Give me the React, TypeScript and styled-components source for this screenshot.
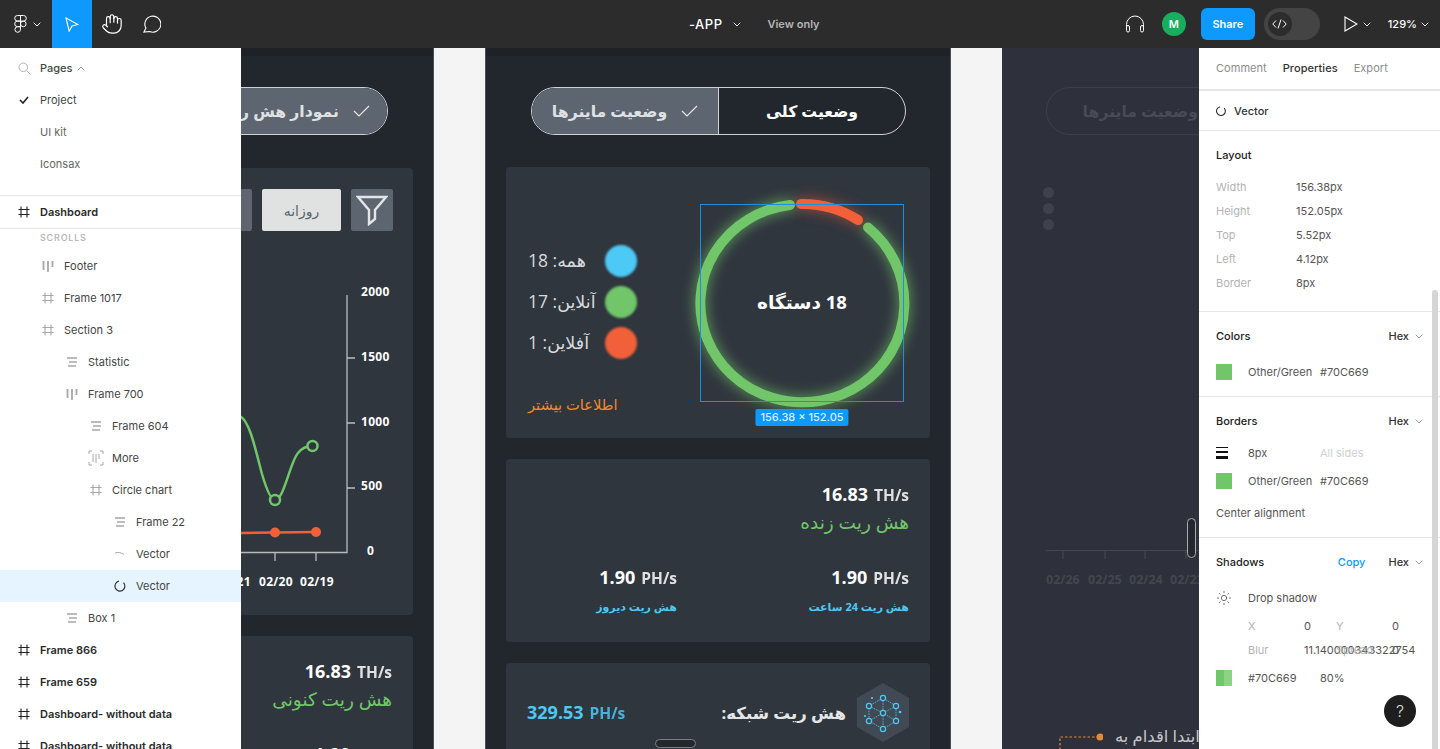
import React from 'react';
import styled, { createGlobalStyle } from 'styled-components';
import { Hand, Sun } from 'lucide-react';

const UI_FONT = `Inter, "Liberation Sans", sans-serif`;
const APP_FONT = `"Open Sans", "DejaVu Sans", sans-serif`;
const GREEN = '#70c669';
const BLUE = '#4cc9f5';
const ORANGE = '#f2603a';
const FIGMA_BLUE = '#0d99ff';

const GlobalStyle = createGlobalStyle`
  html, body { margin: 0; padding: 0; height: 100%; overflow: hidden; }
  * { box-sizing: border-box; }
  body { font-family: ${UI_FONT}; font-size: 11px; }
`;

const Shell = styled.div`
  width: 1440px;
  height: 749px;
  display: flex;
  flex-direction: column;
  overflow: hidden;
`;

/* top bar */
const TopBar = styled.header`
  height: 48px;
  flex: none;
  display: flex;
  align-items: center;
  background: #2c2c2c;
  color: #fff;
  padding-right: 11px;
`;
const ToolGroup = styled.div`
  width: 689px;
  height: 100%;
  display: flex;
  align-items: center;
`;
const LogoButton = styled.div`
  width: 52px;
  height: 100%;
  display: flex;
  align-items: center;
  gap: 6px;
  padding-left: 14px;
`;
const ToolButton = styled.div<{ $active?: boolean }>`
  width: 40px;
  height: 100%;
  display: flex;
  align-items: center;
  justify-content: center;
  background: ${(p) => (p.$active ? FIGMA_BLUE : 'transparent')};
`;
const FileTitle = styled.div`
  display: flex;
  align-items: center;
  gap: 11px;
  font-size: 13px;
  font-weight: 500;
  letter-spacing: 0.5px;
`;
const ViewOnly = styled.span`
  margin-left: 26px;
  font-size: 11px;
  font-weight: 600;
  color: #b5b5b5;
`;
const RightTools = styled.div`
  margin-left: auto;
  display: flex;
  align-items: center;
`;
const Avatar = styled.div`
  width: 24px;
  height: 24px;
  border-radius: 50%;
  margin: 0 15px 0 17px;
  background: #18ae5e;
  display: flex;
  align-items: center;
  justify-content: center;
  font-size: 11px;
  font-weight: 600;
`;
const ShareButton = styled.div`
  width: 54px;
  height: 32px;
  border-radius: 6px;
  background: ${FIGMA_BLUE};
  display: flex;
  align-items: center;
  justify-content: center;
  font-size: 11px;
  font-weight: 600;
`;
const CodeToggle = styled.div`
  width: 56px;
  height: 32px;
  margin: 0 24px 0 9px;
  border-radius: 16px;
  background: #444;
  padding: 4px;
`;
const CodeKnob = styled.div`
  width: 24px;
  height: 24px;
  border-radius: 50%;
  background: #2c2c2c;
  display: flex;
  align-items: center;
  justify-content: center;
`;
const ZoomLabel = styled.span`
  margin: 0 4px 0 17px;
  font-size: 11px;
  font-weight: 500;
`;
const PlayGroup = styled.div`
  display: flex;
  align-items: center;
  gap: 5px;
`;

const Main = styled.div`
  flex: 1;
  min-height: 0;
  display: flex;
`;

/* layers panel */
const LayersPanel = styled.aside`
  width: 241px;
  flex: none;
  background: #fff;
  color: #333;
  padding-top: 4px;
  overflow: hidden;
  position: relative;
  z-index: 2;
`;
const LayerRow = styled.div<{ $indent?: number; $strong?: boolean; $selected?: boolean; $muted?: boolean }>`
  height: 32px;
  display: flex;
  align-items: center;
  gap: 8px;
  padding-left: ${(p) => 16 + (p.$indent || 0) * 24}px;
  background: ${(p) => (p.$selected ? '#e5f4ff' : 'transparent')};
  font-weight: ${(p) => (p.$strong ? 600 : 400)};
  color: ${(p) => (p.$muted ? '#666' : p.$strong ? '#2a2a2a' : '#444')};
  white-space: nowrap;
`;
const LayerIconBox = styled.span`
  width: 16px;
  height: 16px;
  flex: none;
  display: flex;
  align-items: center;
  justify-content: center;
`;
const PagesGroup = styled.div`
  padding-bottom: 15px;
  border-bottom: 1px solid #e5e5e5;
`;
const CurrentPage = styled.div`
  border-bottom: 1px solid #e5e5e5;
`;
const PagesTitle = styled.span`
  display: flex;
  align-items: center;
  gap: 5px;
  font-weight: 500;
`;
const ScrollLabel = styled.div`
  height: 21px;
  padding: 0 0 4px 40px;
  display: flex;
  align-items: center;
  font-size: 9px;
  font-weight: 500;
  letter-spacing: 0.8px;
  color: #b3b3b3;
`;

/* canvas */
const Canvas = styled.main`
  flex: 1;
  min-width: 0;
  position: relative;
  overflow: hidden;
  background: #f4f4f4;
  font-family: ${APP_FONT};
`;
const Frame = styled.section<{ $left: number; $faded?: boolean }>`
  position: absolute;
  top: 0;
  left: ${(p) => p.$left}px;
  width: 466px;
  height: 100%;
  overflow: hidden;
  background: ${(p) => (p.$faded ? '#2e303b' : '#22262d')};
  border-left: 1px solid ${(p) => (p.$faded ? '#2e303b' : '#4b4f55')};
  border-right: 1px solid ${(p) => (p.$faded ? '#2e303b' : '#4b4f55')};
`;
const FrameStrip = styled.div<{ $faded?: boolean }>`
  height: 8px;
  background: ${(p) => (p.$faded ? 'transparent' : '#1e2126')};
`;
const PillBar = styled.div<{ $faded?: boolean; $inset: number }>`
  width: 375px;
  height: 48px;
  margin: 31px 0 0 ${(p) => p.$inset}px;
  display: flex;
  border: 1.5px solid ${(p) => (p.$faded ? '#3d404b' : '#cfd2d4')};
  border-radius: 24px;
  overflow: hidden;
`;
const PillSegment = styled.div<{ $active?: boolean; $faded?: boolean; $divider?: boolean }>`
  flex: 1;
  display: flex;
  flex-direction: row-reverse;
  align-items: center;
  justify-content: center;
  gap: 14px;
  font-size: 15.7px;
  font-weight: 700;
  white-space: nowrap;
  color: ${(p) => (p.$faded ? '#484b56' : p.$active ? '#dfe1e3' : '#fff')};
  background: ${(p) => (p.$active ? '#5c6570' : 'transparent')};
  border-left: ${(p) => (p.$divider ? '1.5px solid #cfd2d4' : 'none')};
`;
const Card = styled.div<{ $top: number; $height?: number }>`
  margin: ${(p) => p.$top}px 20px 0;
  ${(p) => (p.$height ? `height: ${p.$height}px;` : '')}
  background: #30363e;
  border-radius: 4px;
`;
const FilterBody = styled.div`
  display: flex;
  flex-direction: column;
  align-items: flex-end;
  padding: 21px 20px 0 0;
  height: 100%;
`;
const FilterRow = styled.div`
  display: flex;
  gap: 10px;
`;
const FilterChip = styled.div<{ $light?: boolean; $width: number }>`
  width: ${(p) => p.$width}px;
  height: 42px;
  flex: none;
  display: flex;
  align-items: center;
  justify-content: center;
  border-radius: 2px;
  font-size: 14px;
  color: #5c646e;
  background: ${(p) => (p.$light ? '#e0e2e2' : '#5c6570')};
`;
const ChartSvg = styled.svg`
  display: block;
  margin-top: 49px;
  font-family: ${APP_FONT};
  font-size: 12px;
  font-weight: 700;
  letter-spacing: 0.3px;
`;
const StatsBody = styled.div`
  padding: 23px 21px 0;
  display: flex;
  flex-direction: column;
  align-items: flex-end;
`;
const Rate = styled.div<{ $color?: string }>`
  font-size: 18px;
  line-height: 24px;
  font-weight: 700;
  color: ${(p) => p.$color || '#fff'};
  white-space: nowrap;
`;
const RateUnit = styled.span`
  font-size: 15.5px;
  font-weight: 700;
  color: inherit;
  opacity: 0.85;
  margin-left: 6px;
`;
const RateLabel = styled.div<{ $small?: boolean; $color: string }>`
  direction: rtl;
  font-size: ${(p) => (p.$small ? 11 : 18.5)}px;
  font-weight: ${(p) => (p.$small ? 700 : 400)};
  line-height: 24px;
  margin-top: ${(p) => (p.$small ? 5 : 3)}px;
  color: ${(p) => p.$color};
  white-space: nowrap;
`;
const StatsPair = styled.div`
  align-self: stretch;
  display: flex;
  justify-content: space-between;
  margin-top: 31px;
  padding-left: 34px;
`;
const StatCol = styled.div`
  width: 116px;
  display: flex;
  flex-direction: column;
  align-items: flex-end;
`;

/* device overview card */
const OverviewBody = styled.div`
  height: 100%;
  display: flex;
  justify-content: space-between;
  padding: 16px 8px 0 22px;
`;
const LegendColumn = styled.div`
  width: 109px;
  padding-top: 62px;
  display: flex;
  flex-direction: column;
`;
const LegendRow = styled.div`
  height: 32px;
  margin-bottom: 9px;
  display: flex;
  align-items: center;
  justify-content: space-between;
`;
const LegendText = styled.span`
  direction: rtl;
  color: #d8dadc;
  font-size: 17.5px;
  line-height: 28px;
  margin-top: -3px;
  white-space: nowrap;
`;
const LegendDot = styled.span<{ $color: string }>`
  width: 32px;
  height: 32px;
  flex: none;
  border-radius: 50%;
  background: ${(p) => p.$color};
  filter: blur(0.8px);
`;
const MoreLink = styled.div`
  direction: rtl;
  margin-top: 26px;
  width: 110px;
  color: #f0892c;
  font-size: 14.7px;
  white-space: nowrap;
  text-align: left;
`;
const RingBox = styled.div`
  width: 240px;
  height: 240px;
  flex: none;
  position: relative;
  display: flex;
  align-items: center;
  justify-content: center;
`;
const RingSvg = styled.svg`
  position: absolute;
  inset: 0;
  overflow: visible;
`;
const RingCaption = styled.span`
  position: relative;
  top: -2px;
  direction: rtl;
  color: #fff;
  font-size: 18.5px;
  font-weight: 700;
`;
const SelectionBox = styled.div`
  position: absolute;
  left: 18px;
  top: 21px;
  width: 204px;
  height: 198px;
  border: 1px solid #1a8fe3;
`;
const SizeBadge = styled.div`
  position: absolute;
  left: 50%;
  top: 226px;
  transform: translateX(-50%);
  height: 17px;
  padding: 0 5px;
  border-radius: 2px;
  background: ${FIGMA_BLUE};
  color: #d9f0ff;
  font-family: ${UI_FONT};
  font-size: 11px;
  font-weight: 500;
  line-height: 17px;
  white-space: nowrap;
`;
const NetworkBody = styled.div`
  height: 98px;
  display: flex;
  align-items: center;
  justify-content: space-between;
  padding: 0 21px;
`;
const NetworkTitle = styled.div`
  display: flex;
  align-items: center;
  gap: 11px;
  color: #e5e6e7;
  font-size: 16.6px;
  font-weight: 700;
`;
const NetworkText = styled.span`
  direction: rtl;
`;

/* faded neighbour frame */
const FadedDots = styled.div`
  display: flex;
  flex-direction: column;
  gap: 5px;
  margin: 52px 0 0 40px;
`;
const FadedDot = styled.span`
  width: 11px;
  height: 11px;
  border-radius: 50%;
  background: #3f424d;
`;
const FadedAxis = styled.svg`
  display: block;
  margin: 314px 0 0 43px;
  font-family: ${APP_FONT};
  font-size: 12.5px;
  font-weight: 700;
`;
const NoteRow = styled.div`
  display: flex;
  align-items: flex-start;
  gap: 12px;
  margin: 138px 0 0 56px;
`;
const NoteText = styled.span`
  direction: rtl;
  color: #c4c5c9;
  font-size: 16.4px;
  line-height: 20px;
  white-space: nowrap;
`;
const ResizeHandle = styled.div<{ $x: number; $y: number; $w: number; $h: number; $edge: string }>`
  position: absolute;
  left: ${(p) => p.$x}px;
  top: ${(p) => p.$y}px;
  width: ${(p) => p.$w}px;
  height: ${(p) => p.$h}px;
  border: 1px solid ${(p) => p.$edge};
  border-radius: 5px;
  background: #24272e;
`;

/* inspect panel */
const InspectPanel = styled.aside`
  width: 241px;
  flex: none;
  position: relative;
  z-index: 2;
  background: #fff;
  color: #333;
  overflow: hidden;
`;
const Tabs = styled.div`
  height: 43px;
  display: flex;
  align-items: center;
  gap: 16px;
  padding: 0 0 2px 17px;
  border-bottom: 2px solid #e6e6e6;
  letter-spacing: 0.05px;
`;
const Tab = styled.span<{ $active?: boolean }>`
  font-weight: ${(p) => (p.$active ? 500 : 400)};
  color: ${(p) => (p.$active ? '#333' : '#8c8c8c')};
`;
const SelectedRow = styled.div`
  height: 40px;
  display: flex;
  align-items: center;
  gap: 8px;
  padding: 0 17px;
  font-weight: 500;
  border-bottom: 1px solid #e6e6e6;
`;
const Section = styled.div<{ $bottom: number; $last?: boolean }>`
  padding: 16px 17px ${(p) => p.$bottom}px;
  border-bottom: ${(p) => (p.$last ? 'none' : '1px solid #e6e6e6')};
`;
const SectionHead = styled.div<{ $gap: number }>`
  height: 16px;
  margin-bottom: ${(p) => p.$gap}px;
  display: flex;
  align-items: center;
  font-weight: 500;
  color: #222;
`;
const HeadAction = styled.span<{ $blue?: boolean; $first?: boolean }>`
  display: flex;
  align-items: center;
  gap: 6px;
  margin-left: ${(p) => (p.$first ? 'auto' : '23px')};
  color: ${(p) => (p.$blue ? FIGMA_BLUE : '#333')};
`;
const PropRow = styled.div<{ $height?: number }>`
  height: ${(p) => p.$height || 24}px;
  display: flex;
  align-items: center;
  white-space: nowrap;
`;
const PropLabel = styled.span<{ $width?: number; $offset?: number }>`
  width: ${(p) => p.$width || 80}px;
  margin-left: ${(p) => p.$offset || 0}px;
  flex: none;
  color: #b3b3b3;
`;
const PropValue = styled.span<{ $width?: number; $muted?: boolean }>`
  ${(p) => (p.$width ? `width: ${p.$width}px; flex: none;` : '')}
  color: ${(p) => (p.$muted ? '#cfcfcf' : '#555')};
`;
const IconCell = styled.span`
  width: 32px;
  flex: none;
  display: flex;
  align-items: center;
`;
const Swatch = styled.span<{ $alpha?: boolean }>`
  width: 16px;
  height: 16px;
  display: block;
  background: ${(p) =>
    p.$alpha ? `linear-gradient(90deg, ${GREEN} 50%, rgba(112,198,105,0.8) 50%)` : GREEN};
`;
const ThicknessIcon = styled.span`
  width: 12px;
  height: 12px;
  display: flex;
  flex-direction: column;
  justify-content: space-between;
  &::before, &::after { content: ''; display: block; background: #111; }
  &::before { height: 1px; }
  &::after { height: 3px; }
`;
const ThicknessMid = styled.i`
  display: block;
  height: 2px;
  background: #111;
`;
const PanelScrollbar = styled.div`
  position: absolute;
  right: 2px;
  top: 242px;
  bottom: 0;
  width: 6px;
  border-radius: 3px 3px 0 0;
  background: #d5d5d5;
`;
const HelpButton = styled.div`
  position: absolute;
  left: 185px;
  top: 647px;
  width: 32px;
  height: 32px;
  border-radius: 50%;
  background: #1e1e1e;
  color: #ddd;
  display: flex;
  align-items: center;
  justify-content: center;
  font-size: 16px;
  font-weight: 300;
`;

const Chevron = ({ color = '#fff', up = false }: { color?: string; up?: boolean }) => (
  <svg width="8" height="5" viewBox="0 0 8 5" fill="none">
    <path d={up ? 'M.7 4.3 4 1l3.3 3.3' : 'M.7.7 4 4 7.3.7'} stroke={color} strokeWidth="1" />
  </svg>
);

const CheckMark = () => (
  <svg width="17" height="12" viewBox="0 0 17 12" fill="none">
    <path d="M1 6l5 5L16 1" stroke="#e3e5e6" strokeWidth="1.2" />
  </svg>
);

type LayerKind = 'frame' | 'columns' | 'rows' | 'more' | 'curve' | 'arc' | 'none';

const LayerIcon = ({ kind, dark }: { kind: LayerKind; dark?: boolean }) => {
  const c = dark ? '#222' : '#a8a8a8';
  if (kind === 'none') return <LayerIconBox />;
  return (
    <LayerIconBox>
      <svg width="16" height="16" viewBox="0 0 16 16" fill="none" stroke={c}>
        {kind === 'frame' && <path d="M5 2.5v11M11 2.5v11M2.5 5.5h11M2.5 10.5h11" strokeWidth="1.1" />}
        {kind === 'columns' && <path d="M3.5 3v9M8 3v11M12.5 3v6" strokeWidth="1.8" />}
        {kind === 'rows' && <path d="M3 4h10M5 8h8M4 12h8" strokeWidth="1.6" />}
        {kind === 'more' && (
          <path d="M1 4V1h3M12 1h3v3M1 12v3h3M12 15h3v-3M5 4v8M8 4v9M11 4v5" strokeWidth="1" />
        )}
        {kind === 'curve' && <path d="M3 7c3-1 6-.5 9 1.4" strokeWidth="1" />}
        {kind === 'arc' && <path d="M7 3.2a5 5 0 1 0 4.5 1.4" stroke="#333" strokeWidth="1.2" />}
      </svg>
    </LayerIconBox>
  );
};

const LAYERS: { name: string; kind: LayerKind; indent: number; strong?: boolean; selected?: boolean }[] = [
  { name: 'Footer', kind: 'columns', indent: 1 },
  { name: 'Frame 1017', kind: 'frame', indent: 1 },
  { name: 'Section 3', kind: 'frame', indent: 1 },
  { name: 'Statistic', kind: 'rows', indent: 2 },
  { name: 'Frame 700', kind: 'columns', indent: 2 },
  { name: 'Frame 604', kind: 'rows', indent: 3 },
  { name: 'More', kind: 'more', indent: 3 },
  { name: 'Circle chart', kind: 'frame', indent: 3 },
  { name: 'Frame 22', kind: 'rows', indent: 4 },
  { name: 'Vector', kind: 'curve', indent: 4 },
  { name: 'Vector', kind: 'arc', indent: 4, selected: true },
  { name: 'Box 1', kind: 'rows', indent: 2 },
  { name: 'Frame 866', kind: 'frame', indent: 0, strong: true },
  { name: 'Frame 659', kind: 'frame', indent: 0, strong: true },
  { name: 'Dashboard- without data', kind: 'frame', indent: 0, strong: true },
  { name: 'Dashboard- without data', kind: 'frame', indent: 0, strong: true },
];

const LAYOUT_PROPS = [
  ['Width', '156.38px'],
  ['Height', '152.05px'],
  ['Top', '5.52px'],
  ['Left', '4.12px'],
  ['Border', '8px'],
];

const NetworkIcon = () => {
  const nodes = [
    [26, 15],
    [12, 23],
    [39, 23],
    [26, 30],
    [12, 38],
    [39, 38],
    [26, 46],
  ];
  return (
    <svg width="52" height="59" viewBox="0 0 52 59" fill="none">
      <path d="M26 0 52 15v29L26 59 0 44V15z" fill="#414955" />
      <g stroke={BLUE} strokeWidth="0.8" strokeDasharray="1.6 1">
        <path d="M26 15 12 23v15l14 8 13-8V23zM26 15v15M12 23l14 7 13-7M12 38l14-8 13 8M26 30v16" />
      </g>
      {nodes.map(([x, y]) => (
        <circle key={`${x}-${y}`} cx={x} cy={y} r="2.6" fill="#414955" stroke={BLUE} strokeWidth="1.2" />
      ))}
      <circle cx="15" cy="15" r="1.1" fill={BLUE} />
      <circle cx="43" cy="29" r="1.3" fill={BLUE} />
      <circle cx="8" cy="33" r="1.1" fill={BLUE} />
    </svg>
  );
};

const HashRate = ({ value, unit, color }: { value: string; unit: string; color?: string }) => (
  <Rate $color={color}>
    {value}
    <RateUnit>{unit}</RateUnit>
  </Rate>
);

const TopToolbar = () => (
  <TopBar>
    <ToolGroup>
      <LogoButton>
        <svg width="13" height="18" viewBox="0 0 13 18" fill="none" stroke="#fff" strokeWidth="1">
          <path d="M6.5.5h-3a2.8 2.8 0 0 0 0 5.6h3zM6.5.5h3a2.8 2.8 0 0 1 0 5.6h-3zM6.5 6.1h-3a2.8 2.8 0 0 0 0 5.6h3z" />
          <circle cx="9.3" cy="8.9" r="2.8" />
          <path d="M3.5 11.7h3v3a2.8 2.8 0 1 1-3-3z" />
        </svg>
        <Chevron />
      </LogoButton>
      <ToolButton $active>
        <svg width="14" height="15" viewBox="0 0 14 15" fill="none">
          <path d="M1 1l12 6.5-6 1.5-2.8 5.2z" stroke="#fff" strokeWidth="1.1" />
        </svg>
      </ToolButton>
      <ToolButton>
        <Hand size={22} strokeWidth={1.3} color="#fff" />
      </ToolButton>
      <ToolButton>
        <svg width="18" height="18" viewBox="0 0 18 18" fill="none">
          <path d="M1 17l1.9-3.9A8 8 0 1 1 6.7 16.5z" stroke="#fff" strokeWidth="1.1" />
        </svg>
      </ToolButton>
    </ToolGroup>
    <FileTitle>
      -APP
      <Chevron />
    </FileTitle>
    <ViewOnly>View only</ViewOnly>
    <RightTools>
      <svg width="20" height="18" viewBox="0 0 20 18" fill="none" stroke="#fff" strokeWidth="1">
        <path d="M1.5 12V9.5a8.5 8.5 0 0 1 17 0V12" />
        <rect x="1.5" y="10.5" width="3" height="6.5" rx="1.5" />
        <rect x="15.5" y="10.5" width="3" height="6.5" rx="1.5" />
      </svg>
      <Avatar>M</Avatar>
      <ShareButton>Share</ShareButton>
      <CodeToggle>
        <CodeKnob>
          <svg width="15" height="10" viewBox="0 0 15 10" fill="none" stroke="#fff" strokeWidth="1">
            <path d="M4 1.5.8 5 4 8.5M11 1.5 14.2 5 11 8.5M9 .5 6 9.5" />
          </svg>
        </CodeKnob>
      </CodeToggle>
      <PlayGroup>
        <svg width="14" height="16" viewBox="0 0 14 16" fill="none">
          <path d="M1 1l12 7-12 7z" stroke="#fff" strokeWidth="1.1" />
        </svg>
        <Chevron />
      </PlayGroup>
      <ZoomLabel>129%</ZoomLabel>
      <Chevron />
    </RightTools>
  </TopBar>
);

const Layers = () => (
  <LayersPanel>
    <PagesGroup>
      <LayerRow>
        <LayerIconBox>
          <svg width="13" height="13" viewBox="0 0 13 13" fill="none" stroke="#b3b3b3" strokeWidth="1">
            <circle cx="5.3" cy="5.3" r="4.3" />
            <path d="M8.5 8.5l4 4" />
          </svg>
        </LayerIconBox>
        <PagesTitle>
          Pages
          <Chevron color="#999" up />
        </PagesTitle>
      </LayerRow>
      <LayerRow>
        <LayerIconBox>
          <svg width="10" height="8" viewBox="0 0 10 8" fill="none" stroke="#222" strokeWidth="1.6">
            <path d="M1 4l3 3 5-6" />
          </svg>
        </LayerIconBox>
        Project
      </LayerRow>
      <LayerRow $muted>
        <LayerIcon kind="none" />
        UI kit
      </LayerRow>
      <LayerRow $muted>
        <LayerIcon kind="none" />
        Iconsax
      </LayerRow>
    </PagesGroup>
    <CurrentPage>
      <LayerRow $strong>
        <LayerIcon kind="frame" dark />
        Dashboard
      </LayerRow>
    </CurrentPage>
    <ScrollLabel>SCROLLS</ScrollLabel>
    {LAYERS.map((layer, i) => (
      <LayerRow key={i} $indent={layer.indent} $strong={layer.strong} $selected={layer.selected}>
        <LayerIcon kind={layer.kind} dark={layer.strong} />
        {layer.name}
      </LayerRow>
    ))}
  </LayersPanel>
);

const LeftFrame = () => (
  <Frame $left={-273}>
    <FrameStrip />
    <PillBar $inset={44}>
      <PillSegment />
      <PillSegment $active>
        <CheckMark />
        <span>نمودار هش ریت</span>
      </PillSegment>
    </PillBar>
    <Card $top={33} $height={447}>
      <FilterBody>
        <FilterRow>
          <FilterChip $width={79} />
          <FilterChip $width={79} $light>
            روزانه
          </FilterChip>
          <FilterChip $width={42}>
            <svg width="32" height="31" viewBox="0 0 32 31" fill="none">
              <path d="M2 2h28L19 15v9l-6 5V15z" stroke="#e3e5e6" strokeWidth="2.4" />
            </svg>
          </FilterChip>
        </FilterRow>
        <ChartSvg width="200" height="310" viewBox="193 280 200 310">
          <path
            d="M347 295v257.5H193M347 358h8M347 423h8M347 488h8M275 553v8M316 553v8"
            stroke="#b9bcbf"
            strokeWidth="1.3"
            fill="none"
          />
          <path
            d="M240 416c10 6 15 32 22 58 5 17 9 26 13 26 9 0 15-38 23-47 4-5 10-7 14-7"
            stroke={GREEN}
            strokeWidth="2.5"
            fill="none"
          />
          <circle cx="275" cy="500" r="5" fill="#30363e" stroke={GREEN} strokeWidth="2.5" />
          <circle cx="312.5" cy="446" r="5" fill="#30363e" stroke={GREEN} strokeWidth="2.5" />
          <path d="M193 533.5 316 532" stroke={ORANGE} strokeWidth="2.5" />
          <circle cx="275" cy="532.5" r="5" fill={ORANGE} />
          <circle cx="316" cy="532" r="5" fill={ORANGE} />
          <g fill="#fff">
            <text x="361" y="296">2000</text>
            <text x="361" y="361">1500</text>
            <text x="361" y="426">1000</text>
            <text x="361" y="490">500</text>
            <text x="367" y="555">0</text>
            <text x="217" y="586">02/21</text>
            <text x="259" y="586">02/20</text>
            <text x="300" y="586">02/19</text>
          </g>
        </ChartSvg>
      </FilterBody>
    </Card>
    <Card $top={21}>
      <StatsBody>
        <HashRate value="16.83" unit="TH/s" />
        <RateLabel $color={GREEN}>هش ریت کنونی</RateLabel>
        <StatsPair>
          <StatCol>
            <HashRate value="1.90" unit="PH/s" />
          </StatCol>
          <StatCol>
            <HashRate value="1.90" unit="PH/s" />
          </StatCol>
        </StatsPair>
      </StatsBody>
    </Card>
  </Frame>
);

const CenterFrame = () => (
  <Frame $left={244}>
    <FrameStrip />
    <PillBar $inset={45}>
      <PillSegment $active>
        <CheckMark />
        <span>وضعیت ماینرها</span>
      </PillSegment>
      <PillSegment $divider>
        <span>وضعیت کلی</span>
      </PillSegment>
    </PillBar>
    <Card $top={32} $height={271}>
      <OverviewBody>
        <div>
          <LegendColumn>
            <LegendRow>
              <LegendText>همه: 18</LegendText>
              <LegendDot $color={BLUE} />
            </LegendRow>
            <LegendRow>
              <LegendText>آنلاین: 17</LegendText>
              <LegendDot $color={GREEN} />
            </LegendRow>
            <LegendRow>
              <LegendText>آفلاین: 1</LegendText>
              <LegendDot $color={ORANGE} />
            </LegendRow>
          </LegendColumn>
          <MoreLink>اطلاعات بیشتر</MoreLink>
        </div>
        <RingBox>
          <RingSvg width="240" height="240" viewBox="682 183 240 240" fill="none">
            <path
              d="M790 205 A102 99 0 1 0 868 227.5"
              stroke={GREEN}
              strokeWidth="10"
              strokeLinecap="round"
              filter="drop-shadow(0 0 7px rgba(112,198,105,0.8))"
            />
            <path
              d="M801 204 A102 99 0 0 1 858 220"
              stroke={ORANGE}
              strokeWidth="10"
              strokeLinecap="round"
              filter="drop-shadow(0 0 7px rgba(242,96,58,0.6))"
            />
          </RingSvg>
          <RingCaption>18 دستگاه</RingCaption>
          <SelectionBox />
          <SizeBadge>156.38 × 152.05</SizeBadge>
        </RingBox>
      </OverviewBody>
    </Card>
    <Card $top={21} $height={183}>
      <StatsBody>
        <HashRate value="16.83" unit="TH/s" />
        <RateLabel $color={GREEN}>هش ریت زنده</RateLabel>
        <StatsPair>
          <StatCol>
            <HashRate value="1.90" unit="PH/s" />
            <RateLabel $small $color={BLUE}>هش ریت دیروز</RateLabel>
          </StatCol>
          <StatCol>
            <HashRate value="1.90" unit="PH/s" />
            <RateLabel $small $color={BLUE}>هش ریت 24 ساعت</RateLabel>
          </StatCol>
        </StatsPair>
      </StatsBody>
    </Card>
    <Card $top={21} $height={120}>
      <NetworkBody>
        <HashRate value="329.53" unit="PH/s" color={BLUE} />
        <NetworkTitle>
          <NetworkText>هش ریت شبکه:</NetworkText>
          <NetworkIcon />
        </NetworkTitle>
      </NetworkBody>
    </Card>
  </Frame>
);

const RightFrame = () => (
  <Frame $left={761} $faded>
    <FrameStrip $faded />
    <PillBar $faded $inset={43}>
      <PillSegment $faded>
        <span>وضعیت ماینرها</span>
      </PillSegment>
      <PillSegment $faded />
    </PillBar>
    <FadedDots>
      <FadedDot />
      <FadedDot />
      <FadedDot />
    </FadedDots>
    <FadedAxis width="154" height="44" viewBox="1046 545 154 44">
      <path d="M1046 551.5H1200M1063 552v8M1105 552v8M1145 552v8M1186 552v8" stroke="#43464f" strokeWidth="1.2" />
      <g fill="#43464f">
        <text x="1046" y="585">02/26</text>
        <text x="1088" y="585">02/25</text>
        <text x="1129" y="585">02/24</text>
        <text x="1170" y="585">02/23</text>
      </g>
    </FadedAxis>
    <NoteRow>
      <svg width="44" height="24" viewBox="0 0 44 24" fill="none">
        <path d="M1 24V11h40" stroke="#e88a35" strokeWidth="1.2" strokeDasharray="2.5 2" />
        <circle cx="41" cy="11" r="3.5" fill="#e88a35" />
      </svg>
      <NoteText>ابتدا اقدام به</NoteText>
    </NoteRow>
  </Frame>
);

const Inspector = () => (
  <InspectPanel>
    <Tabs>
      <Tab>Comment</Tab>
      <Tab $active>Properties</Tab>
      <Tab>Export</Tab>
    </Tabs>
    <SelectedRow>
      <svg width="10" height="10" viewBox="0 0 10 10" fill="none" stroke="#333" strokeWidth="1.1">
        <path d="M4 .8a4.4 4.4 0 1 0 4.2 1.3" />
      </svg>
      Vector
    </SelectedRow>
    <Section $bottom={16}>
      <SectionHead $gap={12}>Layout</SectionHead>
      {LAYOUT_PROPS.map(([label, value]) => (
        <PropRow key={label}>
          <PropLabel>{label}</PropLabel>
          <PropValue>{value}</PropValue>
        </PropRow>
      ))}
    </Section>
    <Section $bottom={12}>
      <SectionHead $gap={16}>
        Colors
        <HeadAction $first>
          Hex
          <Chevron color="#999" />
        </HeadAction>
      </SectionHead>
      <PropRow>
        <IconCell>
          <Swatch />
        </IconCell>
        <PropValue $width={72}>Other/Green</PropValue>
        <PropValue>#70C669</PropValue>
      </PropRow>
    </Section>
    <Section $bottom={8}>
      <SectionHead $gap={12}>
        Borders
        <HeadAction $first>
          Hex
          <Chevron color="#999" />
        </HeadAction>
      </SectionHead>
      <PropRow>
        <IconCell>
          <ThicknessIcon>
            <ThicknessMid />
          </ThicknessIcon>
        </IconCell>
        <PropValue $width={72}>8px</PropValue>
        <PropValue $muted>All sides</PropValue>
      </PropRow>
      <PropRow $height={32}>
        <IconCell>
          <Swatch />
        </IconCell>
        <PropValue $width={72}>Other/Green</PropValue>
        <PropValue>#70C669</PropValue>
      </PropRow>
      <PropRow $height={32}>
        <PropValue>Center alignment</PropValue>
      </PropRow>
    </Section>
    <Section $bottom={0} $last>
      <SectionHead $gap={12}>
        Shadows
        <HeadAction $first $blue>
          Copy
        </HeadAction>
        <HeadAction>
          Hex
          <Chevron color="#999" />
        </HeadAction>
      </SectionHead>
      <PropRow $height={32}>
        <IconCell>
          <Sun size={16} strokeWidth={1} color="#333" />
        </IconCell>
        <PropValue>Drop shadow</PropValue>
      </PropRow>
      <PropRow>
        <PropLabel $width={56} $offset={32}>X</PropLabel>
        <PropValue $width={32}>0</PropValue>
        <PropLabel $width={56}>Y</PropLabel>
        <PropValue>0</PropValue>
      </PropRow>
      <PropRow>
        <PropLabel $width={56} $offset={32}>Blur</PropLabel>
        <PropValue $width={32}>11.140000343322754</PropValue>
        <PropLabel $width={56}>Spread</PropLabel>
        <PropValue>0</PropValue>
      </PropRow>
      <PropRow $height={32}>
        <IconCell>
          <Swatch $alpha />
        </IconCell>
        <PropValue $width={72}>#70C669</PropValue>
        <PropValue>80%</PropValue>
      </PropRow>
    </Section>
    <PanelScrollbar />
    <HelpButton>?</HelpButton>
  </InspectPanel>
);

const App = () => (
  <Shell>
    <GlobalStyle />
    <TopToolbar />
    <Main>
      <Layers />
      <Canvas>
        <LeftFrame />
        <CenterFrame />
        <RightFrame />
        <ResizeHandle $x={946} $y={470} $w={9} $h={40} $edge="#a9abaf" />
        <ResizeHandle $x={414} $y={691} $w={41} $h={9} $edge="#7b7e83" />
      </Canvas>
      <Inspector />
    </Main>
  </Shell>
);

export default App;
